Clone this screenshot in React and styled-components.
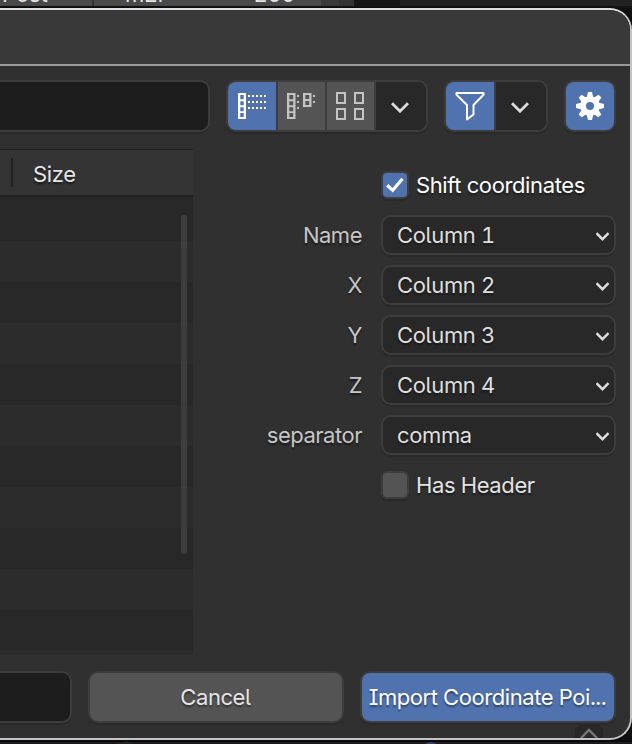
import React from "react";
import styled, { createGlobalStyle, css } from "styled-components";

const Global = createGlobalStyle`
  * { box-sizing: border-box; }
  html, body { margin: 0; background: #111; }
  body {
    font-family: "Inter", sans-serif;
    font-size: 22px;
    letter-spacing: -0.38px;
    font-feature-settings: "ss02", "tnum";
    color: #e5e5e5;
    overflow: hidden;
  }
`;

const Screen = styled.div`
  width: 632px;
  height: 744px;
  display: flex;
  flex-direction: column;
  overflow: hidden;
  position: relative;
  background: #101011;
`;

const Backdrop = styled.div`
  height: 8px;
  flex: none;
  display: flex;
  overflow: hidden;
  background: #222;
  border-bottom: 2px solid #151515;
  font-feature-settings: normal;
  letter-spacing: 0;
`;

const BackCell = styled.div`
  width: ${(p) => p.$w}px;
  height: 6px;
  flex: none;
  overflow: hidden;
  display: flex;
  align-items: flex-end;
  padding-left: ${(p) => p.$pad || 0}px;
  padding-bottom: 4px;
  background: ${(p) => p.$bg};
  border-right: ${(p) => (p.$line ? "2px solid #333" : "none")};
  line-height: 16px;
  white-space: nowrap;
  span { height: 16px; }
`;

const Dialog = styled.main`
  height: 732px;
  flex: none;
  display: flex;
  flex-direction: column;
  background: #303030;
  border: 2px solid #c4c4c4;
  border-top-color: #dedede;
  border-left: 0;
  border-radius: 0 22px 22px 0;
  overflow: hidden;
  box-shadow: 0 0 3px #000;
`;

const TitleBar = styled.header`
  height: 56px;
  flex: none;
  background: #393939;
  border-bottom: 2px solid #999;
`;

const Toolbar = styled.div`
  height: 66px;
  flex: none;
  padding: 14px 14px 0 0;
  display: flex;
  align-items: flex-start;
`;

const frame = css`
  border: 2px solid #3d3d3d;
  border-radius: 10px;
  box-shadow: 0 2px 1px rgba(0, 0, 0, 0.13);
`;

const TextField = styled.div`
  ${frame}
  width: ${(p) => p.$w}px;
  height: 52px;
  flex: none;
  border-left: 0;
  border-radius: 0 10px 10px 0;
  background: #1d1d1d;
`;

const ButtonGroup = styled.div`
  ${frame}
  height: 52px;
  display: flex;
  flex: none;
  gap: 2px;
  overflow: hidden;
  background: #3d3d3d;
  margin-left: 16px;
`;

const tones = { active: "#5073b0", idle: "#545454", menu: "#282828" };

const ToolButton = styled.button`
  width: ${(p) => p.$w}px;
  height: 48px;
  padding: 0;
  border: 0;
  display: grid;
  place-items: center;
  background: ${(p) => tones[p.$tone]};
  svg { display: block; }
`;

const Content = styled.div`
  height: 538px;
  flex: none;
  display: flex;
`;

const FileList = styled.section`
  width: 193px;
  height: 506px;
  margin-top: 17px;
  flex: none;
  display: flex;
  flex-direction: column;
  border-top: 1px solid #202020;
`;

const ListHeader = styled.div`
  height: 47px;
  flex: none;
  display: flex;
  align-items: center;
  padding: 2px 0 0 11px;
  background: #343434;
  border-bottom: 2px solid #202020;
  text-shadow: 0 2px 2px rgba(0, 0, 0, 0.5);
  &::before {
    content: "";
    width: 2px;
    height: 29px;
    margin: -2px 20px 0 0;
    background: #202020;
  }
`;

const Rows = styled.div`
  flex: 1;
  display: flex;
  justify-content: flex-end;
  padding: 18px 6px 0 0;
  background:
    linear-gradient(#2c2c2c, #2c2c2c) bottom / 100% 4px no-repeat,
    repeating-linear-gradient(#2c2c2c 0 41px, #282828 41px 82px) 0 44px no-repeat,
    #282828;
`;

const ScrollThumb = styled.div`
  width: 6px;
  height: 339px;
  border-radius: 3px;
  background: #3d3d3d;
`;

const Options = styled.form`
  flex: 1;
  display: grid;
  grid-template-columns: 169px 235px;
  grid-template-rows: repeat(7, 40px);
  column-gap: 19px;
  row-gap: 10px;
  padding-top: 33px;
  align-items: center;
`;

const Label = styled.label`
  text-align: right;
  color: #c6c6c6;
  line-height: 40px;
  letter-spacing: -0.48px;
  text-shadow: 0 2px 2px rgba(0, 0, 0, 0.5);
`;

const Select = styled.div`
  ${frame}
  height: 40px;
  display: flex;
  align-items: center;
  justify-content: space-between;
  padding: 0 4px 0 14px;
  background: #282828;
  color: #dedede;
  line-height: 36px;
  letter-spacing: -0.36px;
  text-shadow: 0 2px 2px rgba(0, 0, 0, 0.4);
  svg { margin-top: 2px; }
`;

const CheckRow = styled.div`
  grid-column: 2;
  display: flex;
  align-items: center;
  gap: 7px;
  color: ${(p) => (p.$on ? "#fff" : "#e2e2e2")};
  text-shadow: 0 2px 2px rgba(0, 0, 0, 0.5);
  line-height: 40px;
`;

const CheckBox = styled.span`
  ${frame}
  width: 28px;
  height: 28px;
  border-radius: 6px;
  background: ${(p) => (p.$on ? tones.active : tones.idle)};
  display: grid;
  place-items: center;
`;

const Footer = styled.footer`
  height: 54px;
  flex: none;
  display: flex;
  gap: 16px;
  padding-top: 1px;
`;

const ActionButton = styled.button`
  ${frame}
  width: 256px;
  height: 52px;
  flex: none;
  padding: 0 1px 0 0;
  font: inherit;
  font-feature-settings: inherit;
  letter-spacing: -0.42px;
  white-space: nowrap;
  background: ${(p) => (p.$primary ? tones.active : tones.idle)};
  color: ${(p) => (p.$primary ? "#fff" : "#e5e5e5")};
  text-shadow: 0 2px 2px rgba(0, 0, 0, 0.45);
`;

const RegionTab = styled.div`
  width: 28px;
  height: 13px;
  margin: 1px 27px 0 auto;
  border-radius: 6px 6px 0 0;
  background: #282828;
  overflow: hidden;
  flex: none;
  svg { display: block; }
`;

const BackdropBottom = styled.div`
  height: 4px;
  display: flex;
  gap: 284px;
  padding: 1px 0 0 116px;
  background: linear-gradient(#0b0a0b 0 2px, #1c181b 2px);
  svg { display: block; flex: none; }
`;

const Chevron = ({ large }) =>
  large ? (
    <svg width="20" height="14" viewBox="0 0 20 14" fill="none" stroke="#dcdcdc" strokeWidth="2.8">
      <path d="M1 4.2 9 12.2 17 4.2" />
    </svg>
  ) : (
    <svg width="14" height="12" viewBox="0 0 14 12" fill="none" stroke="#dcdcdc" strokeWidth="2.4">
      <path d="M.5 3.2 6.5 9.2 12.5 3.2" />
    </svg>
  );

const dots = (x0, x1, ys) =>
  ys.flatMap((y) => {
    const out = [];
    for (let x = x0; x <= x1; x += 4) out.push(<rect key={`${x}-${y}`} x={x} y={y} width="2" height="2" />);
    return out;
  });

const ListIcon = () => (
  <svg width="28" height="26" viewBox="0 0 28 26" fill="#fff">
    <path d="M0 0h8v26H0zM2.3 2v4.3h3.4V2zM2.3 8.3v4h3.4v-4zM2.3 14.3v4h3.4v-4zM2.3 20v4h3.4v-4z" fillRule="evenodd" />
    {dots(10, 26, [2, 8, 14])}
  </svg>
);

const ColumnsIcon = () => (
  <svg width="29" height="26" viewBox="0 0 29 26" fill="#c4c4c4">
    <path d="M0 0h8.5v26H0zM2.3 2v4.3h3.9V2zM2.3 8.3v4h3.9v-4zM2.3 14.3v4h3.9v-4zM2.3 20v4h3.9v-4z" fillRule="evenodd" />
    <path d="M16 0h8.5v14H16zM18.3 2v4h3.9V2zM18.3 8v4h3.9V8z" fillRule="evenodd" />
    {dots(10, 10, [2, 8, 14])}
    {dots(26, 26, [2, 8])}
  </svg>
);

const GridIcon = () => (
  <svg width="31" height="28" viewBox="0 0 31 28" fill="none" stroke="#c4c4c4" strokeWidth="2">
    <path d="M2 1h8v10H2zM20 1h8v10H20zM2 17h8v10H2zM20 17h8v10H20z" />
  </svg>
);

const FunnelIcon = () => (
  <svg width="30" height="30" viewBox="0 0 30 30" fill="none" stroke="#fff" strokeWidth="2" strokeLinejoin="round">
    <path d="M1.5 2h27v1.8L18.5 14v9.5L12 28.5V14L1.5 3.8z" />
  </svg>
);

const GearIcon = () => (
  <svg width="28" height="28" viewBox="-14 -14 28 28" fill="#fff">
    {[0, 45, 90, 135].map((a) => (
      <path key={a} transform={`rotate(${a})`} d="M-2-14h4l1.4 6v16L2 14h-4l-1.4-6v-16z" />
    ))}
    <circle r="9.8" />
    <circle r="4" fill="#5073b0" />
  </svg>
);

const fields = [
  ["Name", "Column 1"],
  ["X", "Column 2"],
  ["Y", "Column 3"],
  ["Z", "Column 4"],
  ["separator", "comma"],
];

export default function App() {
  return (
    <Screen>
      <Global />
      <Backdrop>
        <BackCell $w={94} $pad={2} $bg="#494949" $line><span>Post</span></BackCell>
        <BackCell $w={160} $pad={31} $bg="#494949"><span>m2r</span></BackCell>
        <BackCell $w={67} $bg="#494949"><span>200</span></BackCell>
        <BackCell $w={18} $bg="#3a3a3a" />
        <BackCell $w={15} $bg="#333" />
        <BackCell $w={46} $bg="#151515" />
      </Backdrop>
      <Dialog>
        <TitleBar />
        <Toolbar>
          <TextField $w={210} />
          <ButtonGroup>
            <ToolButton $w={48} $tone="active"><ListIcon /></ToolButton>
            <ToolButton $w={47} $tone="idle"><ColumnsIcon /></ToolButton>
            <ToolButton $w={47} $tone="idle"><GridIcon /></ToolButton>
            <ToolButton $w={50} $tone="menu"><Chevron large /></ToolButton>
          </ButtonGroup>
          <ButtonGroup>
            <ToolButton $w={48} $tone="active"><FunnelIcon /></ToolButton>
            <ToolButton $w={50} $tone="menu"><Chevron large /></ToolButton>
          </ButtonGroup>
          <ButtonGroup>
            <ToolButton $w={48} $tone="active"><GearIcon /></ToolButton>
          </ButtonGroup>
        </Toolbar>
        <Content>
          <FileList>
            <ListHeader>Size</ListHeader>
            <Rows><ScrollThumb /></Rows>
          </FileList>
          <Options>
            <CheckRow $on>
              <CheckBox $on>
                <svg width="20" height="20" viewBox="0 0 20 20" fill="none" stroke="#fff" strokeWidth="3.2">
                  <path d="M2.2 10.2 7.7 15.2 17.5 3.8" />
                </svg>
              </CheckBox>
              Shift coordinates
            </CheckRow>
            {fields.map(([label, value]) => (
              <React.Fragment key={label}>
                <Label>{label}</Label>
                <Select>{value}<Chevron /></Select>
              </React.Fragment>
            ))}
            <CheckRow>
              <CheckBox />
              Has Header
            </CheckRow>
          </Options>
        </Content>
        <Footer>
          <TextField $w={72} />
          <ActionButton>Cancel</ActionButton>
          <ActionButton $primary>Import Coordinate Poi...</ActionButton>
        </Footer>
        <RegionTab>
          <svg width="28" height="13" viewBox="0 0 28 13" fill="none" stroke="#777" strokeWidth="2.4">
            <path d="M6 13 14 5l8 8" />
          </svg>
        </RegionTab>
      </Dialog>
      <BackdropBottom>
        <svg width="20" height="3"><path d="M0 3Q10-2 20 3" fill="#222" /></svg>
        <svg width="20" height="3"><path d="M5 3Q10-1 17 3" fill="#33416e" /></svg>
      </BackdropBottom>
    </Screen>
  );
}
